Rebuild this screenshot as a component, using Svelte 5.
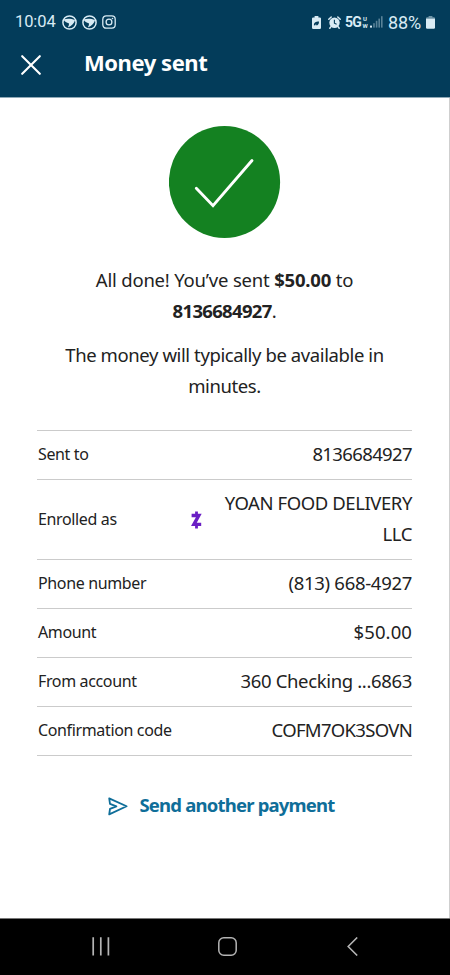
<script lang="ts">
  interface Row { label: string; value: string; tracking: number; zelle?: boolean; }

  const phone = '8136684927';
  const amount = '$50.00';

  const rows: Row[] = [
    { label: 'Sent to', value: phone, tracking: -0.62 },
    { label: 'Enrolled as', value: 'YOAN FOOD DELIVERY LLC', tracking: -0.42, zelle: true },
    { label: 'Phone number', value: '(813) 668-4927', tracking: -0.3 },
    { label: 'Amount', value: amount, tracking: 0.1 },
    { label: 'From account', value: '360 Checking ...6863', tracking: -0.35 },
    { label: 'Confirmation code', value: 'COFM7OK3SOVN', tracking: -0.7 },
  ];
</script>

<div class="screen">
  <header class="top">
    <div class="status">
      <span class="status__time">10:04</span>
      {#each [0, 1] as n (n)}
        <svg class="status__app" width="15" height="15" viewBox="0 0 15 15">
          <circle cx="7.5" cy="7.5" r="6.6" fill="none" stroke="currentColor" stroke-width="1.5" />
          <path d="M1.6 4.6C4.6 3.4 9.4 3.6 13 5.2C12.2 8.4 9.4 11.2 5.8 12.4C6.8 10.8 7.2 9.4 6.8 8.2C4.8 8 2.6 6.8 1.6 4.6Z" fill="currentColor" />
        </svg>
      {/each}
      <svg class="status__insta" width="14" height="14" viewBox="0 0 14 14" fill="none" stroke="currentColor">
        <rect x="0.8" y="0.8" width="12.4" height="12.4" rx="3.4" stroke-width="1.3" />
        <circle cx="7" cy="7" r="2.9" stroke-width="1.3" />
        <circle cx="10.5" cy="3.5" r="0.8" fill="currentColor" stroke="none" />
      </svg>

      <svg class="status__saver" width="9" height="13" viewBox="0 0 9 13">
        <path d="M2.6 0H6.4V1.4H7.8Q9 1.4 9 2.6V11.8Q9 13 7.8 13H1.2Q0 13 0 11.8V2.6Q0 1.4 1.2 1.4H2.6Z" fill="currentColor" />
        <path d="M2 9.8C1.6 6.6 3.6 5.4 7 5.4C7.1 8.2 5.6 9.8 3.4 9.2L5 7.4" fill="#033c5a" />
      </svg>
      <svg class="status__alarm" width="13" height="13" viewBox="0 0 13 13">
        <circle cx="6.5" cy="6.8" r="5.2" fill="currentColor" />
        <path d="M0.8 3.2L3.2 1M12.2 3.2L9.8 1M3 10.6L1.8 12.2M10 10.6L11.2 12.2" stroke="currentColor" stroke-width="1.5" stroke-linecap="round" />
        <path d="M6.4 3.8V7.2L8.6 8.2" fill="none" stroke="#033c5a" stroke-width="1.1" />
      </svg>
      <span class="status__net">5G</span>
      <span class="status__uw"><span>U</span><span>W</span></span>
      <svg class="status__signal" width="13" height="12" viewBox="0 0 13 12" fill="currentColor">
        <rect x="0" y="9.6" width="2" height="2" />
        <g opacity="0.4">
          <rect x="3.2" y="7.2" width="1.6" height="4.4" />
          <rect x="5.8" y="4.8" width="1.6" height="6.8" />
          <rect x="8.4" y="2.6" width="1.6" height="9" />
          <rect x="11" y="0.2" width="1.6" height="11.4" />
        </g>
      </svg>
      <span class="status__pct">88%</span>
      <svg class="status__batt" width="9" height="13" viewBox="0 0 9 13" fill="currentColor">
        <path d="M2.6 0H6.4V1.2H7.8Q9 1.2 9 2.6H0Q0 1.2 1.2 1.2H2.6Z" opacity="0.5" />
        <path d="M0 2.5H9V11.5Q9 12.8 7.8 12.8H1.2Q0 12.8 0 11.5Z" />
      </svg>
    </div>

    <div class="bar">
      <button class="bar__close" aria-label="Close">
        <svg width="20" height="20" viewBox="0 0 20 20">
          <path d="M1.2 1.2L18.8 18.8M18.8 1.2L1.2 18.8" stroke="#fff" stroke-width="2.1" stroke-linecap="round" />
        </svg>
      </button>
      <h1 class="bar__title">Money sent</h1>
    </div>
  </header>

  <main class="body">
    <svg class="check" width="112" height="113" viewBox="0 0 112 113">
      <ellipse cx="55.5" cy="56" rx="55.6" ry="56" fill="#148121" />
      <path d="M27.3 62.2L44 79.7L83 34.5" fill="none" stroke="#fff" stroke-width="2.9" stroke-linecap="round" />
    </svg>

    <p class="msg msg--sent">All done! You’ve sent <b>{amount}</b> to <b class="msg__phone">{phone}</b>.</p>
    <p class="msg">The money will typically be available in minutes.</p>

    <dl class="details">
      {#each rows as row (row.label)}
        <div class="row">
          <dt class="row__label">{row.label}</dt>
          {#if row.zelle}
            <svg class="row__zelle" width="11" height="18" viewBox="0 0 11 18" fill="none" stroke="#6a1fc4">
              <path d="M0.6 4.5H7.8L2.9 13.4H10.2" stroke-width="3.4" />
              <path d="M5.5 0.6V4M5.5 14V17.4" stroke-width="2.8" />
            </svg>
          {/if}
          <dd class="row__value" style="letter-spacing:{row.tracking}px">{row.value}</dd>
        </div>
      {/each}
    </dl>

    <button class="again">
      <svg width="20" height="19" viewBox="0 0 20 19" fill="none" stroke="currentColor" stroke-width="1.8" stroke-linejoin="round" stroke-linecap="round">
        <path d="M1.2 1.4L18.6 9.3L1.2 17.4L2 11.8L8.4 9.3L2 6.9Z" />
      </svg>
      <span>Send another payment</span>
    </button>
  </main>

  <nav class="nav">
    <svg width="18" height="19" viewBox="0 0 18 19" stroke="currentColor" stroke-width="1.7">
      <path d="M1.2 0.3V18.5M8.8 0.3V18.5M16.4 0.3V18.5" />
    </svg>
    <svg class="nav__home" width="19" height="19" viewBox="0 0 19 19" fill="none" stroke="currentColor" stroke-width="1.5">
      <rect x="0.8" y="0.8" width="17.4" height="17.4" rx="5" />
    </svg>
    <svg width="11" height="19" viewBox="0 0 11 19" fill="none" stroke="currentColor" stroke-width="1.6">
      <path d="M10.2 0.5L1.2 9.5L10.2 18.5" />
    </svg>
  </nav>
</div>

<style>
  :global(body) { background:#fff; }

  .screen {
    display:flex; flex-direction:column; width:450px; height:975px; overflow:hidden;
    font-family:'Noto Sans','Open Sans',sans-serif; color:#222; background:#fff;
  }

  /* Header */
  .top { flex:none; height:97px; background:#033c5a; border-bottom:1px solid #8fa9b7; box-sizing:content-box; }
  .status {
    display:flex; align-items:center; height:44px; padding-left:15px;
    color:#d9ebf4; font-family:Roboto,sans-serif; line-height:1;
  }
  .status svg { display:block; flex:none; }
  .status__time { width:40px; margin:1px 7px 0 0; font-size:16.5px; letter-spacing:-.1px; }
  .status__app { margin-right:5px; }
  .status__insta { margin-left:0; }
  .status__saver { margin-left:196px; }
  .status__alarm { margin-left:7px; }
  .status__net { width:17px; margin-left:4px; font-size:14px; font-weight:700; letter-spacing:-.7px; }
  .status__uw { display:flex; flex-direction:column; width:6px; font-size:6px; font-weight:700; line-height:7px; text-align:center; }
  .status__signal { margin-left:2px; }
  .status__pct { width:36px; margin:1px 0 0 5px; font-size:18px; letter-spacing:-.1px; }
  .status__batt { margin-left:2px; }

  .bar { display:flex; align-items:center; height:40px; padding-left:21px; }
  .bar__close { display:flex; padding:2px 0 0; border:0; background:none; cursor:pointer; }
  .bar__title { margin:0 0 4px 43px; font-size:22px; font-weight:700; line-height:30px; letter-spacing:-.45px; color:#fff; }

  /* Body */
  .body {
    flex:1; display:flex; flex-direction:column; align-items:center;
    padding:28px 37px 0; border-right:1px solid #cfcfcf;
  }
  .check { flex:none; margin-bottom:25px; }
  .msg { width:350px; margin:0; font-size:18.5px; line-height:31px; letter-spacing:-.4px; text-align:center; }
  .msg--sent { width:280px; margin-bottom:13px; letter-spacing:-.2px; }
  .msg__phone { letter-spacing:-.68px; }

  .details { width:100%; margin:29px 0 0; border-top:1px solid #cbcbcb; box-sizing:border-box; }
  .row { display:flex; align-items:center; padding:7px 0 10px; border-bottom:1px solid #cbcbcb; line-height:31px; }
  .row__label { padding:1px 0 0 1px; margin-bottom:-1px; font-size:16px; letter-spacing:-.36px; white-space:nowrap; }
  .row__zelle { flex:none; margin-left:auto; margin-top:3px; }
  .row__value { margin:0 0 0 auto; font-size:18.5px; text-align:right; }
  .row__zelle + .row__value { width:192px; margin-left:18px; }

  .again {
    display:flex; align-items:center; gap:11px; margin:35px 6px 0 0; padding:0; border:0; background:none;
    font:700 18.5px/28px 'Noto Sans','Open Sans',sans-serif; letter-spacing:-.8px; color:#0f6e99; cursor:pointer;
  }
  .again svg { margin-top:3px; }

  /* System buttons */
  .nav {
    flex:none; display:flex; align-items:center; justify-content:space-between; box-sizing:border-box;
    height:57px; padding:0 92px 2px; border-top:1px solid #777; color:#b4b4b4; background:#000;
  }
  .nav__home { margin-right:3px; }
</style>
